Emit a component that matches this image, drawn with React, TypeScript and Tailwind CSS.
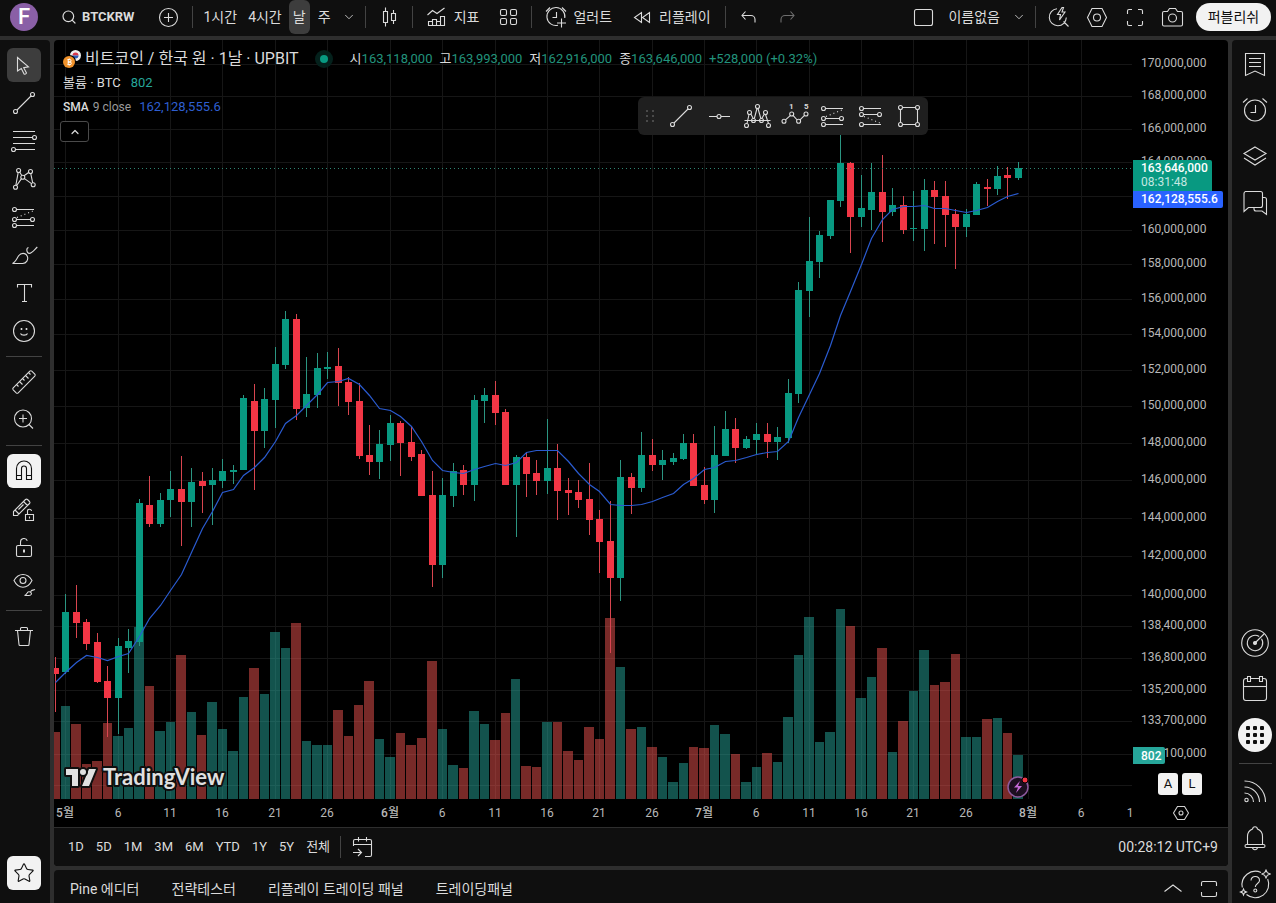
import type { ReactNode } from "react";
import { ChevronDown, ChevronUp, Search, Star } from "lucide-react";

// [up?, high, body top, body bottom, low, volume top]
type Candle = [number, number, number, number, number, number];

const STEP = 10.467;
const FIRST = 65.45;
const xAt = (i: number) => Math.round(FIRST + STEP * i);
const volumeLeft = (i: number) => Math.round(FIRST + STEP * i - 4.5);

// first candle is the last day of April (index -1)
const candles: Candle[] = [
  [0, 657, 668, 674, 712, 732],
  [1, 594, 612, 672, 674, 706],
  [0, 585, 612, 623, 638, 724],
  [0, 619, 622, 644, 650, 764],
  [0, 633, 642, 682, 683, 761],
  [0, 666, 681, 698, 737, 723],
  [1, 638, 646, 698, 734, 736],
  [1, 629, 641, 648, 673, 728],
  [1, 499, 503, 642, 646, 627],
  [0, 476, 505, 524, 527, 686],
  [1, 493, 500, 524, 527, 731],
  [1, 471, 489, 500, 517, 722],
  [0, 456, 489, 502, 546, 655],
  [1, 468, 482, 502, 527, 712],
  [0, 472, 481, 486, 513, 735],
  [1, 468, 480, 485, 525, 702],
  [1, 459, 471, 481, 488, 729],
  [1, 465, 470, 472, 484, 751],
  [1, 395, 398, 470, 470, 697],
  [0, 384, 401, 431, 490, 668],
  [1, 388, 399, 431, 448, 694],
  [1, 347, 364, 400, 428, 632],
  [1, 311, 319, 365, 369, 648],
  [0, 314, 319, 409, 420, 623],
  [1, 357, 394, 408, 417, 741],
  [1, 353, 368, 395, 408, 745],
  [1, 352, 367, 369, 379, 745],
  [0, 348, 366, 383, 406, 710],
  [0, 377, 382, 402, 415, 736],
  [0, 383, 401, 456, 459, 705],
  [0, 425, 455, 462, 475, 681],
  [1, 430, 444, 462, 479, 739],
  [1, 415, 423, 445, 461, 757],
  [0, 421, 423, 443, 476, 733],
  [0, 426, 442, 457, 461, 745],
  [0, 450, 454, 496, 496, 738],
  [0, 471, 495, 565, 587, 661],
  [1, 478, 495, 565, 578, 729],
  [1, 463, 471, 496, 507, 765],
  [0, 465, 470, 485, 495, 768],
  [1, 395, 400, 485, 501, 711],
  [1, 388, 395, 401, 423, 724],
  [0, 381, 395, 413, 425, 740],
  [0, 409, 412, 485, 485, 713],
  [1, 455, 457, 485, 537, 679],
  [0, 452, 457, 474, 497, 766],
  [0, 460, 473, 481, 495, 767],
  [1, 419, 468, 481, 494, 722],
  [0, 444, 468, 491, 520, 722],
  [0, 478, 490, 493, 515, 751],
  [0, 480, 492, 500, 508, 760],
  [0, 463, 499, 520, 535, 727],
  [0, 510, 519, 542, 573, 739],
  [0, 501, 541, 578, 653, 618],
  [1, 460, 477, 578, 601, 667],
  [0, 473, 477, 488, 514, 729],
  [1, 432, 455, 488, 492, 727],
  [0, 439, 455, 465, 471, 747],
  [1, 450, 460, 465, 480, 757],
  [1, 453, 458, 462, 465, 782],
  [1, 434, 443, 459, 460, 763],
  [0, 434, 443, 486, 486, 747],
  [0, 467, 485, 500, 504, 748],
  [1, 426, 455, 500, 513, 725],
  [1, 411, 429, 456, 456, 734],
  [0, 418, 429, 448, 463, 754],
  [1, 436, 439, 448, 449, 782],
  [1, 423, 434, 440, 454, 767],
  [0, 423, 434, 442, 458, 753],
  [1, 427, 437, 442, 460, 762],
  [1, 379, 393, 438, 443, 717],
  [1, 282, 290, 394, 403, 655],
  [1, 217, 261, 291, 317, 617],
  [1, 231, 235, 262, 278, 742],
  [1, 200, 200, 236, 239, 732],
  [1, 130, 163, 201, 207, 609],
  [0, 162, 163, 217, 253, 626],
  [1, 175, 208, 217, 227, 698],
  [1, 163, 192, 210, 230, 677],
  [0, 155, 192, 212, 242, 648],
  [1, 188, 205, 212, 216, 752],
  [0, 196, 205, 230, 234, 721],
  [1, 191, 228, 229, 241, 691],
  [1, 179, 190, 229, 251, 650],
  [0, 181, 190, 197, 244, 685],
  [0, 181, 196, 215, 247, 682],
  [0, 209, 214, 227, 269, 654],
  [1, 209, 214, 227, 237, 737],
  [1, 182, 184, 215, 215, 737],
  [0, 179, 187, 189, 206, 719],
  [1, 166, 176, 189, 195, 718],
  [0, 167, 175, 178, 199, 733],
  [1, 162, 168, 178, 180, 755],
];

const sma = [
  682, 672, 662, 655, 657, 660, 656, 653, 636, 618, 605, 590, 574, 552, 528,
  511, 492, 489, 475, 467, 457, 441, 423, 415, 405, 394, 382, 381, 378, 384,
  395, 408, 410, 416, 426, 441, 460, 470, 472, 473, 469, 466, 463, 465, 462,
  452, 450, 450, 450, 461, 473, 484, 491, 504, 505, 505, 504, 501, 497, 493,
  484, 478, 469, 467, 461, 460, 457, 454, 452, 451, 441, 417, 394, 373, 345,
  315, 291, 264, 238, 219, 209, 206, 206, 205, 208, 208, 210, 212, 210, 207,
  201, 196, 193,
];

// the 162M line has no label: the price tags cover it
const prices: [string, number][] = [
  ["170,000,000", 64],
  ["168,000,000", 96],
  ["166,000,000", 129],
  ["164,000,000", 162],
  ["", 196],
  ["160,000,000", 230],
  ["158,000,000", 264],
  ["156,000,000", 299],
  ["154,000,000", 334],
  ["152,000,000", 370],
  ["150,000,000", 406],
  ["148,000,000", 443],
  ["146,000,000", 480],
  ["144,000,000", 518],
  ["142,000,000", 556],
  ["140,000,000", 595],
  ["138,400,000", 626],
  ["136,800,000", 658],
  ["135,200,000", 690],
  ["133,700,000", 721],
  ["132,100,000", 754],
];

const dates: [string, number][] = [
  ["5월", 0],
  ["6", 5],
  ["11", 10],
  ["16", 15],
  ["21", 20],
  ["26", 25],
  ["6월", 31],
  ["6", 36],
  ["11", 41],
  ["16", 46],
  ["21", 51],
  ["26", 56],
  ["7월", 61],
  ["6", 66],
  ["11", 71],
  ["16", 76],
  ["21", 81],
  ["26", 86],
  ["8월", 92],
  ["6", 97],
];

function Icon({
  size = 28,
  children,
}: {
  size?: number;
  children: ReactNode;
}) {
  return (
    <svg
      width={size}
      height={size}
      viewBox={`0 0 ${size} ${size}`}
      fill="none"
      stroke="currentColor"
      strokeWidth="1.1"
      className="shrink-0"
      aria-hidden="true"
    >
      {children}
    </svg>
  );
}

const TrendLineIcon = () => (
  <Icon>
    <path d="M7 21L21 7" />
    <circle cx="5.5" cy="22.5" r="2" />
    <circle cx="22.5" cy="5.5" r="2" />
  </Icon>
);

const ProjectionIcon = () => (
  <Icon>
    <path d="M6.5 6.5H24M6.5 16.5H20.5M6.5 22.5H24" />
    <path d="M7 14.5L23 8" strokeDasharray="1 3" />
    <circle cx="4.5" cy="6.5" r="2" />
    <circle cx="4.5" cy="16.5" r="2" />
    <circle cx="4.5" cy="22.5" r="2" />
    <circle cx="22.5" cy="16.5" r="2" />
  </Icon>
);

const drawingTools: { label: string; icon: ReactNode }[][] = [
  [
    {
      label: "커서",
      icon: (
        <Icon>
          <path d="M7.5 6.5V20l3.8-2.5 2.8 5.6c.8.3 2-.2 2.4-1l-2.8-5.4 4.8-.9z" />
        </Icon>
      ),
    },
    { label: "추세줄", icon: <TrendLineIcon /> },
    {
      label: "피보나치 되돌림",
      icon: (
        <Icon>
          <path d="M3 4.5h22M3 10.5h19.5M3 16.5h22M5.5 22.5H25" />
          <circle cx="24.5" cy="10.5" r="2" />
          <circle cx="3.5" cy="22.5" r="2" />
        </Icon>
      ),
    },
    {
      label: "패턴",
      icon: (
        <Icon>
          <path d="M5.8 20.5L8.2 7.3M9.6 7l2.2 3.5M14 10.7l5-3.4M20.7 8.3l2 9.5M21.5 18.6l-7.3-5.2M11.5 13.6l-5 7.2" />
          <circle cx="5.5" cy="22.3" r="2" />
          <circle cx="8.6" cy="5.5" r="2" />
          <circle cx="12.8" cy="12.2" r="2" />
          <circle cx="20.5" cy="6.5" r="2" />
          <circle cx="23.2" cy="19.7" r="2" />
        </Icon>
      ),
    },
    { label: "예측", icon: <ProjectionIcon /> },
    {
      label: "브러쉬",
      icon: (
        <Icon>
          <path d="M2.5 22.5h10.2a5.2 5.2 0 0 0 4.6-7.2c-1.8-4-6.5-3.8-8.8-.3-1.6 2.4-3 6.3-6 7.5z" />
          <path d="M18.5 6.5c-2.6.6-2 5.6.8 5.9 2.6.2 4.6-3 8-6.4" />
        </Icon>
      ),
    },
    {
      label: "텍스트",
      icon: (
        <Icon>
          <path d="M7.5 8.5v-3h14v3M14.5 5.5v17M12 22.5h5" />
        </Icon>
      ),
    },
    {
      label: "아이콘",
      icon: (
        <Icon>
          <circle cx="14" cy="14" r="10.5" />
          <path d="M10.5 16.5c.8 2.2 6.2 2.2 7 0" />
          <path d="M11.5 11v2M16.5 11v2" strokeWidth="1.6" />
        </Icon>
      ),
    },
  ],
  [
    {
      label: "측정",
      icon: (
        <Icon>
          <path d="M3.2 19.8L19.8 3.2a1.5 1.5 0 0 1 2 0l3 3a1.5 1.5 0 0 1 0 2L8.2 24.8a1.5 1.5 0 0 1-2 0l-3-3a1.5 1.5 0 0 1 0-2z" />
          <path d="M6.5 16.5l2 2M9.5 13.5l3 3M12.5 10.5l2 2M15.5 7.5l3 3M18.5 4.5l2 2" />
        </Icon>
      ),
    },
    {
      label: "확대",
      icon: (
        <Icon>
          <circle cx="13" cy="12.5" r="8.5" />
          <path d="M19 18.5l4 4M9 12.5h8M13 8.5v8" />
        </Icon>
      ),
    },
  ],
  [
    {
      label: "자석 모드",
      icon: (
        <Icon>
          <path d="M6.5 22.5v-11a7.5 7.5 0 0 1 15 0v11h-5v-11a2.5 2.5 0 0 0-5 0v11zM6.5 18.5h5M16.5 18.5h5" />
        </Icon>
      ),
    },
    {
      label: "드로잉 모드 유지",
      icon: (
        <Icon>
          <path d="M3.5 20.5v-4L15.5 4.5a1.5 1.5 0 0 1 2 0l2 2a1.5 1.5 0 0 1 0 2L7.5 20.5zM13.5 6.5l4 4M5 15l4 4M8.5 14.5l5-5" />
          <path d="M15.5 19.5h8v6h-8zM17.5 19.5v-3a2 2 0 0 1 4-.5M19.5 21.5v2" />
        </Icon>
      ),
    },
    {
      label: "모든 드로잉 잠금",
      icon: (
        <Icon>
          <rect x="6.5" y="12.5" width="15" height="11" rx="1.5" />
          <path d="M10.5 12.5V9a3.5 3.5 0 0 1 6.8-1.2" />
          <path d="M14 16.5v3" strokeWidth="2" />
        </Icon>
      ),
    },
    {
      label: "모든 드로잉 숨기기",
      icon: (
        <Icon>
          <path d="M4 9.5C8.5 1.5 17.5 1.5 22 9.5 17.5 18.5 8.5 18.5 4 9.5z" />
          <circle cx="13" cy="9.5" r="3" />
          <path d="M14.5 24.5h4.5c2.5 0 3-2 1.8-3.2-1.2-1-3-.5-3.6.8-.6 1.2-1.5 2.2-2.7 2.4zM21 21c-.5-2 2-1.5 4-2.5" />
        </Icon>
      ),
    },
  ],
  [
    {
      label: "지우기",
      icon: (
        <Icon>
          <path d="M5 8.5h18M10.5 8.5v-2a1 1 0 0 1 1-1h5a1 1 0 0 1 1 1v2M7.5 8.5l1.5 14a1 1 0 0 0 1 1h8a1 1 0 0 0 1-1l1.5-14" />
        </Icon>
      ),
    },
  ],
];

const favorites: { label: string; icon: ReactNode }[] = [
  { label: "추세줄", icon: <TrendLineIcon /> },
  {
    label: "가로줄",
    icon: (
      <Icon>
        <path d="M4 14.5h8M16 14.5h9" />
        <circle cx="14" cy="14.5" r="2" />
      </Icon>
    ),
  },
  {
    label: "헤드앤숄더",
    icon: (
      <Icon>
        <path d="M1.5 18.5h26M4 21.5L6 12.5M8 12.3l2.3 4.5M11.3 16.5L14 6.5M15 6.5l2.8 10M18.8 16.5l2.3-4M22.5 12.5l3 9" />
        <circle cx="3.5" cy="23.5" r="2" />
        <circle cx="6.5" cy="10.5" r="2" />
        <circle cx="10.5" cy="18.5" r="2" />
        <circle cx="14.5" cy="4.5" r="2" />
        <circle cx="18.5" cy="18.5" r="2" />
        <circle cx="22.5" cy="10.5" r="2" />
        <circle cx="25.5" cy="23.5" r="2" />
      </Icon>
    ),
  },
  {
    label: "엘리엇 임펄스 파동",
    icon: (
      <Icon>
        <path d="M4.5 17.8l5-4.5M12 13.3l4.2 4.7M19 17.8l4.7-4.6" />
        <circle cx="3" cy="19.3" r="2" />
        <circle cx="10.7" cy="12" r="2" />
        <circle cx="17.6" cy="19.3" r="2" />
        <circle cx="25" cy="12" r="2" />
        <text x="8" y="7" fontSize="8" fill="currentColor" stroke="none" className="font-bold">
          1
        </text>
        <text x="23" y="7" fontSize="8" fill="currentColor" stroke="none" className="font-bold">
          5
        </text>
      </Icon>
    ),
  },
  { label: "롱 포지션", icon: <ProjectionIcon /> },
  {
    label: "숏 포지션",
    icon: (
      <Icon>
        <path d="M6.5 6.5H24M6.5 12.5H20.5M6.5 22.5H24" />
        <path d="M7 14.5L23 21" strokeDasharray="1 3" />
        <circle cx="4.5" cy="6.5" r="2" />
        <circle cx="4.5" cy="12.5" r="2" />
        <circle cx="4.5" cy="22.5" r="2" />
        <circle cx="22.5" cy="12.5" r="2" />
      </Icon>
    ),
  },
  {
    label: "네모",
    icon: (
      <Icon>
        <path d="M7.5 5.5h13M7.5 22.5h13M5.5 7.5v13M22.5 7.5v13" />
        <circle cx="5.5" cy="5.5" r="2" />
        <circle cx="22.5" cy="5.5" r="2" />
        <circle cx="5.5" cy="22.5" r="2" />
        <circle cx="22.5" cy="22.5" r="2" />
      </Icon>
    ),
  },
];

const widgetsTop: { label: string; icon: ReactNode }[] = [
  {
    label: "왓치리스트",
    icon: (
      <Icon>
        <path d="M4.5 2.5h19v22l-9.5-4.5-9.5 4.5zM8 7.5h12M8 11.5h12M8 15.5h12" />
      </Icon>
    ),
  },
  {
    label: "얼러트",
    icon: (
      <Icon>
        <circle cx="14" cy="13.5" r="10.5" />
        <path d="M14.5 8v7.5H9.5M2 5.5l4.5-4M26 5.5l-4.5-4" />
      </Icon>
    ),
  },
  {
    label: "오브젝트 트리",
    icon: (
      <Icon>
        <path d="M14 4L25 10.5 14 17 3 10.5zM3 15L14 22 25 15" />
      </Icon>
    ),
  },
  {
    label: "채팅",
    icon: (
      <Icon>
        <path d="M4.5 2.5h15a2 2 0 0 1 2 2v12a2 2 0 0 1-2 2H7.5l-4.500 4v-18a2 2 0 0 1 1.500-2z" />
        <path d="M21.5 8.5h2a2 2 0 0 1 2 2v15l-4.500-3.500h-6a2 2 0 0 1-2-2v-1.500" />
      </Icon>
    ),
  },
];

const widgetsBottom: { label: string; icon: ReactNode }[] = [
  {
    label: "종목 스크리너",
    icon: (
      <Icon>
        <circle cx="14" cy="14" r="13.3" />
        <path d="M20.5 9.8a7.7 7.7 0 1 1-2.300-2.300M14 14l9-9" />
        <circle cx="14" cy="14" r="1.5" fill="currentColor" />
      </Icon>
    ),
  },
  {
    label: "캘린더",
    icon: (
      <Icon>
        <rect x="2.5" y="3.5" width="23" height="22" rx="2.5" />
        <path d="M2.5 11.5h23" />
        <path d="M6.5 1.5h3v5h-3zM18.5 1.5h3v5h-3z" fill="#0f0f0f" />
      </Icon>
    ),
  },
];

const widgetsFooter: { label: string; icon: ReactNode }[] = [
  {
    label: "스트림",
    icon: (
      <Icon>
        <path d="M3.5 3A21 21 0 0 1 24.5 24M3.5 9A15 15 0 0 1 18.5 24M3.5 15A9 9 0 0 1 12.5 24" />
        <circle cx="5.5" cy="22" r="1.7" />
      </Icon>
    ),
  },
  {
    label: "알림",
    icon: (
      <Icon>
        <path d="M6.5 20.5v-8a8 8 0 0 1 5-7.400c.3-3.200 4.700-3.200 5 0a8 8 0 0 1 5 7.400v8" />
        <rect x="4" y="20.5" width="20" height="3" rx="1.5" />
        <path d="M11.5 23.5c.5 3 4.500 3 5 0" />
      </Icon>
    ),
  },
  {
    label: "도움말",
    icon: (
      <Icon size={32}>
        <path d="M22 4.400A13.500 13.500 0 0 0 3.300 19.500M7.500 26.500A13.500 13.500 0 0 0 28.700 11" />
        <path d="M12 12.500c0-5.500 8.500-5 8.500 0 0 3-4.200 3-4.200 6.500" />
        <circle cx="16.3" cy="22.5" r="1.5" />
        <path d="M27 2l1.300 2.700L31 6l-2.700 1.300L27 10l-1.300-2.700L23 6l2.700-1.300zM4.500 21l.9 2.100 2.100.9-2.100.9-.9 2.100-.9-2.100-2.100-.9 2.100-.9z" />
      </Icon>
    ),
  },
];

const ohlc = [
  ["시", "163,118,000"],
  ["고", "163,993,000"],
  ["저", "162,916,000"],
  ["종", "163,646,000"],
];

const ranges = ["1D", "5D", "1M", "3M", "6M", "YTD", "1Y", "5Y", "전체"];
const tabs = ["Pine 에디터", "전략테스터", "리플레이 트레이딩 패널", "트레이딩패널"];

function Divider() {
  return <div className="h-[22px] w-px shrink-0 bg-[#434343]" />;
}

function Header() {
  return (
    <header className="flex h-9 shrink-0 items-center justify-between bg-[#0f0f0f] pb-[2px] text-sm text-[#dbdbdb]">
      <div className="flex items-center">
        <button className="ml-[10px] size-7 rounded-full bg-[#8a5fa6] text-[22px] leading-7 font-medium text-white">
          F
        </button>
        <button className="ml-[23px] flex items-center gap-[5px] text-[13px] font-bold">
          <Search size={16} strokeWidth={1.8} />
          BTCKRW
        </button>
        <button className="ml-5" aria-label="심볼 비교">
          <Icon>
            <circle cx="14.5" cy="14.5" r="9" />
            <path d="M14.5 10v9M10 14.5h9" />
          </Icon>
        </button>
        <div className="ml-[10px]">
          <Divider />
        </div>
        <button className="ml-[10px]">1시간</button>
        <button className="ml-[11px]">4시간</button>
        <button className="ml-[7px] h-[34px] w-[21px] rounded-[6px] bg-[#3d3d3d]">날</button>
        <button className="ml-2">주</button>
        <button className="mr-[9px] ml-[11px]" aria-label="차트 인터벌">
          <ChevronDown size={14} strokeWidth={1.4} />
        </button>
        <Divider />
        <button className="mx-[9px]" aria-label="캔들">
          <Icon>
            <path d="M8.5 8.5h4v11h-4zM10.5 4.5v4M10.5 19.5v4M16.5 10.5h4v7h-4zM18.5 7v3.5M18.5 17.5V21" />
          </Icon>
        </button>
        <Divider />
        <button className="ml-[10px] flex items-center gap-[3px]">
          <Icon>
            <path d="M5.5 22.5v-4h4v4zM9.5 22.5v-6h4v6zM13.5 22.5v-4h4v4zM17.5 22.5v-9h4v9zM4.5 12l5-4.500 4.500 3L21.500 5" />
          </Icon>
          지표
        </button>
        <button className="ml-[15px]" aria-label="레이아웃 템플릿">
          <Icon>
            <rect x="6.5" y="6.5" width="6" height="6" rx="1.5" />
            <rect x="16.5" y="6.5" width="6" height="6" rx="1.5" />
            <rect x="6.5" y="15.5" width="6" height="6" rx="1.5" />
            <rect x="16.5" y="15.5" width="6" height="6" rx="1.5" />
          </Icon>
        </button>
        <div className="ml-[9px]">
          <Divider />
        </div>
        <button className="ml-[10px] flex items-center gap-[3px]">
          <Icon>
            <path d="M16 22.300A9 9 0 1 1 22.800 15M14.500 9v5.500h-4M4 8.500L8 4.500M24 8.500l-4-4M19.500 15.500v9M15 20h9" />
          </Icon>
          얼러트
        </button>
        <button className="ml-4 flex items-center gap-[3px]">
          <Icon>
            <path d="M13.5 9.500v10l-7-5zM21.500 9.500v10l-7-5z" />
          </Icon>
          리플레이
        </button>
        <div className="ml-[14px]">
          <Divider />
        </div>
        <button className="ml-[9px]" aria-label="되돌리기">
          <Icon>
            <path d="M10.5 8.500l-3.500 4 3.500 4M7 12.500h9a4 4 0 0 1 4 4v3" />
          </Icon>
        </button>
        <button className="ml-[10px] text-[#6e6e6e]" aria-label="다시하기">
          <Icon>
            <path d="M17.5 8.500l3.500 4-3.500 4M21 12.500h-9a4 4 0 0 0-4 4v3" />
          </Icon>
        </button>
      </div>

      <div className="flex items-center">
        <button aria-label="레이아웃 셋업">
          <Icon>
            <rect x="4.5" y="6.5" width="18" height="16" rx="2" />
          </Icon>
        </button>
        <button className="ml-[10px] flex items-center gap-3">
          이름없음
          <ChevronDown size={14} strokeWidth={1.4} />
        </button>
        <div className="mr-[9px] ml-[9px]">
          <Divider />
        </div>
        <button aria-label="퀵서치">
          <Icon>
            <path d="M12 5.800a8.500 8.500 0 1 0 9.300 8.700M18.500 18.500l5 5M17 4.500l-4.500 7h3l-1 5.500 5.500-8h-3l1.500-4.500z" />
          </Icon>
        </button>
        <button className="ml-[10px]" aria-label="세팅">
          <Icon>
            <path d="M9 5.500h10l4.500 9-4.500 9H9l-4.500-9z" />
            <circle cx="14" cy="14.5" r="3.5" />
          </Icon>
        </button>
        <button className="ml-[10px]" aria-label="풀스크린 모드">
          <Icon>
            <path d="M6.5 11V8a1.500 1.500 0 0 1 1.500-1.500h3M17 6.500h3A1.500 1.500 0 0 1 21.500 8v3M21.500 18v3a1.500 1.500 0 0 1-1.500 1.500h-3M11 22.500H8A1.500 1.500 0 0 1 6.500 21v-3" />
          </Icon>
        </button>
        <button className="ml-[9px]" aria-label="스냅샷">
          <Icon>
            <path d="M6 8.500h3.500l2-3h6l2 3H23a1.500 1.500 0 0 1 1.500 1.500v11.500A1.500 1.500 0 0 1 23 23H6a1.500 1.500 0 0 1-1.500-1.500V10A1.500 1.500 0 0 1 6 8.500z" />
            <circle cx="14.5" cy="15" r="4" />
          </Icon>
        </button>
        <button className="mr-[5px] ml-[10px] h-7 w-[75px] rounded-full bg-[#f2f2f2] text-[#0f0f0f]">
          퍼블리쉬
        </button>
      </div>
    </header>
  );
}

function LeftToolbar() {
  return (
    <nav className="flex w-[50px] shrink-0 flex-col items-center rounded-tr bg-[#0f0f0f] pt-2 pr-[2px] pb-[13px] text-[#dbdbdb]">
      {drawingTools.map((group, g) => (
        <div key={g} className="flex flex-col items-center">
          {g > 0 && <div className="my-2 h-px w-9 bg-[#434343]" />}
          <div className="flex flex-col gap-1">
            {group.map((tool) => (
              <button
                key={tool.label}
                aria-label={tool.label}
                className={
                  tool.label === "커서"
                    ? "flex size-[34px] items-center justify-center rounded-[6px] bg-[#3d3d3d]"
                    : tool.label === "자석 모드"
                      ? "flex size-[34px] items-center justify-center rounded-[6px] bg-[#f2f2f2] text-[#0f0f0f]"
                      : "flex size-[34px] items-center justify-center"
                }
              >
                {tool.icon}
              </button>
            ))}
          </div>
        </div>
      ))}
      <button
        aria-label="즐겨찾기 툴바"
        className="mt-auto flex size-[34px] items-center justify-center rounded-[6px] bg-[#f2f2f2] text-[#0f0f0f]"
      >
        <Star size={22} strokeWidth={1.2} />
      </button>
    </nav>
  );
}

function RightToolbar() {
  const item = "flex h-9 w-[42px] items-center justify-center";
  return (
    <nav className="flex w-11 shrink-0 flex-col items-center justify-between rounded-tl bg-[#0f0f0f] pt-[7px] pb-px pl-[2px] text-[#dbdbdb]">
      <div className="flex flex-col gap-2.5">
        {widgetsTop.map((w) => (
          <button key={w.label} aria-label={w.label} className={item}>
            {w.icon}
          </button>
        ))}
      </div>
      <div className="flex flex-col items-center gap-2.5">
        {widgetsBottom.map((w) => (
          <button key={w.label} aria-label={w.label} className={item}>
            {w.icon}
          </button>
        ))}
        <button aria-label="프로덕트" className={item}>
          <span className="grid size-[34px] grid-cols-[4px_4px_4px] place-content-center gap-[3px] rounded-full bg-[#f2f2f2]">
            {Array.from({ length: 9 }, (_, i) => (
              <span key={i} className="size-1 rounded-[1px] bg-[#0f0f0f]" />
            ))}
          </span>
        </button>
        <div className="h-px w-[33px] bg-[#434343]" />
        {widgetsFooter.map((w) => (
          <button key={w.label} aria-label={w.label} className={item}>
            {w.icon}
          </button>
        ))}
      </div>
    </nav>
  );
}

function PriceChart() {
  return (
    <svg
      viewBox="54 40 1174 787"
      preserveAspectRatio="none"
      className="block h-full w-full"
      role="img"
      aria-label="BTCKRW 일봉 차트"
    >
      <g fill="#161616">
        {prices.map(([, y]) => (
          <rect key={y} x="54" y={y} width="1078" height="1" />
        ))}
        <rect x="54" y="785" width="1078" height="1" />
        {dates.map(([, i]) => (
          <rect key={i} x={xAt(i)} y="40" width="1" height="759" />
        ))}
      </g>

      {candles.map(([up, , , , , top], n) => (
        <rect
          key={n}
          x={volumeLeft(n - 1)}
          y={top}
          width={volumeLeft(n) - volumeLeft(n - 1) - 1}
          height={799 - top}
          fill={up ? "#26a69a" : "#ef5350"}
          fillOpacity="0.5"
        />
      ))}

      {candles.map(([up, high, top, bottom, low], n) => (
        <g key={n}>
          <rect
            x={xAt(n - 1)}
            y={high}
            width="1"
            height={low - high}
            fill={up ? "#2b9581" : "#d8454f"}
          />
          <rect
            x={xAt(n - 1) - 3}
            y={top}
            width="7"
            height={bottom - top}
            fill={up ? "#089981" : "#f23645"}
          />
        </g>
      ))}

      <polyline
        points={sma.map((y, n) => `${xAt(n - 1) + 0.5},${y + 0.5}`).join(" ")}
        fill="none"
        stroke="#2a5bd0"
        strokeWidth="1.2"
      />
      <path d="M54 168.5H1132" stroke="#2f8573" strokeDasharray="1 3" />

      <g fontSize="12" fill="#b8b8b8">
        {prices
          .filter(([label]) => label)
          .map(([label, y]) => (
            <text key={label} x="1141" y={y + 3}>
              {label}
            </text>
          ))}
        {dates.map(([label, i]) => (
          <text
            key={i}
            x={xAt(i)}
            y="817"
            textAnchor="middle"
            className={label.endsWith("월") ? "font-medium" : ""}
          >
            {label}
          </text>
        ))}
        <text x="1130" y="817" textAnchor="middle">
          1
        </text>
      </g>

      <path d="M1133 160h77a2 2 0 0 1 2 2v29h-79z" fill="#089981" />
      <path d="M1133 191h88a2 2 0 0 1 2 2v13a2 2 0 0 1-2 2h-88z" fill="#2962ff" />
      <path d="M1133 747h30a2 2 0 0 1 2 2v13a2 2 0 0 1-2 2h-30z" fill="#26a69a" />
      <g fontSize="12" fill="#fff" className="font-medium">
        <text x="1141" y="172">163,646,000</text>
        <text x="1141" y="203">162,128,555.6</text>
        <text x="1141" y="760">802</text>
      </g>
      <text x="1141" y="186" fontSize="12" fill="#c5e8e1">
        08:31:48
      </text>

      <circle cx="1018" cy="787" r="10" fill="#1c0f20" stroke="#8d5a9e" strokeWidth="1.5" />
      <path d="M1020 781l-6 6.5h4l-2 5.5 6-7h-4z" fill="#c66bd8" />
      <circle cx="1025" cy="780" r="3" fill="#f23645" stroke="#000" />

      <g fill="#e0e0e0" stroke="#0f0f0f" strokeWidth="4" strokeLinejoin="round" paintOrder="stroke">
        <path d="M66 769h12v17h-6v-11h-6zM89 769h7l-7 17h-7z" />
        <circle cx="83" cy="772" r="3" />
        <text x="103" y="785" fontSize="22" className="font-[Lato] font-bold">
          TradingView
        </text>
      </g>
    </svg>
  );
}

function Legend() {
  return (
    <div className="absolute top-[9px] left-[9px] text-[13px] text-[#dbdbdb]">
      <div className="flex h-5 items-center">
        <svg width="18" height="18" viewBox="0 0 18 18" aria-hidden="true">
          <circle cx="12.5" cy="5.5" r="5.5" fill="#eee" />
          <path d="M9.5 5.5a3 3 0 0 1 6 0z" fill="#d8384a" />
          <path d="M9.5 5.5a3 3 0 0 0 6 0z" fill="#2b5cb8" />
          <circle cx="6.5" cy="11.5" r="6.5" fill="#000" />
          <circle cx="6" cy="12" r="6" fill="#f0922b" />
          <path
            d="M4.5 9.5h2.300a1.200 1.200 0 0 1 0 2.500H5h2a1.300 1.300 0 0 1 0 2.600H4.500M5.200 9.500v5M6.300 8.500v1M6.300 14.500v1"
            fill="none"
            stroke="#fff"
          />
        </svg>
        <h1 className="ml-1 text-base whitespace-nowrap">
          비트코인 / 한국 원 · 1날 · UPBIT
        </h1>
        <span className="ml-4 flex size-[18px] items-center justify-center rounded-full bg-[#04211c]">
          <span className="size-2 rounded-full bg-[#089981]" />
        </span>
        <div className="ml-[17px] flex gap-[7px] whitespace-nowrap">
          {ohlc.map(([label, value]) => (
            <span key={label}>
              {label}
              <span className="text-[#22937c]">{value}</span>
            </span>
          ))}
          <span className="text-[#22937c]">+528,000 (+0.32%)</span>
        </div>
      </div>
      <div className="mt-1 flex h-5 items-center gap-[10px]">
        <span>볼륨 · BTC</span>
        <span className="text-[#26a69a]">802</span>
      </div>
      <div className="mt-1 flex h-5 items-center">
        <span className="text-xs font-medium">SMA</span>
        <span className="ml-1 text-xs text-[#9a9a9a]">9 close</span>
        <span className="ml-2 text-[#2f5fd0]">162,128,555.6</span>
      </div>
      <button
        aria-label="인디케이터 레전드 숨기기"
        className="mt-1 -ml-[3px] flex h-[21px] w-[29px] items-center justify-center rounded-[3px] border border-[#4a4a4a] bg-black"
      >
        <ChevronUp size={12} strokeWidth={2.4} />
      </button>
    </div>
  );
}

function FavoritesBar() {
  return (
    <div className="absolute top-[57px] left-[584px] flex h-[38px] items-center rounded-[6px] bg-[#1f1f1f] pr-[5px] pl-2 text-[#dbdbdb]">
      <div className="mr-[13px] grid grid-cols-2 gap-x-1 gap-y-[3px]">
        {Array.from({ length: 6 }, (_, i) => (
          <span key={i} className="size-[2px] bg-[#4a4a4a]" />
        ))}
      </div>
      <div className="flex gap-[10px]">
        {favorites.map((tool) => (
          <button key={tool.label} aria-label={tool.label}>
            {tool.icon}
          </button>
        ))}
      </div>
    </div>
  );
}

function ChartPanel() {
  return (
    <section className="flex min-h-0 flex-1 flex-col overflow-hidden rounded bg-black">
      <div className="relative min-h-0 flex-1">
        <PriceChart />
        <Legend />
        <FavoritesBar />
        <div className="absolute right-[26px] bottom-[32px] flex gap-1">
          <button className="h-[22px] w-5 rounded-[3px] bg-[#f2f2f2] text-[13px] text-[#0f0f0f]">
            A
          </button>
          <button className="h-[22px] w-5 rounded-[3px] bg-[#f2f2f2] text-[13px] text-[#0f0f0f]">
            L
          </button>
        </div>
        <button
          aria-label="액시스 세팅"
          className="absolute right-[38px] bottom-[5px] text-[#cfcfcf]"
        >
          <Icon size={18}>
            <path d="M5.5 2.500h7l4 6.500-4 6.500h-7L1.500 9z" />
            <circle cx="9" cy="9" r="2" />
          </Icon>
        </button>
      </div>
      <div className="flex h-[39px] shrink-0 items-center justify-between border-t border-[#2e2e2e] bg-[#0f0f0f] pr-[10px] pl-[14px] text-[13px] text-[#dbdbdb]">
        <div className="flex items-center">
          <div className="flex gap-3">
            {ranges.map((r) => (
              <button key={r}>{r}</button>
            ))}
          </div>
          <div className="mr-[10px] ml-[10px]">
            <Divider />
          </div>
          <button aria-label="다음 날짜로 가기">
            <Icon size={24}>
              <path d="M2.5 11V6A1.500 1.500 0 0 1 4 4.500h15A1.500 1.500 0 0 1 20.500 6v14a1.500 1.500 0 0 1-1.500 1.500h-5M2.500 9.500h18M7.500 2v4.500M15.500 2v4.500M2 17.500h8M7 14l3.500 3.500L7 21" />
            </Icon>
          </button>
        </div>
        <button className="text-sm">00:28:12 UTC+9</button>
      </div>
    </section>
  );
}

function BottomTabs() {
  return (
    <footer className="flex h-[33px] shrink-0 items-center justify-between rounded-t bg-[#0f0f0f] pt-1 pr-[5px] pl-4 text-sm text-[#dbdbdb]">
      <div className="flex gap-8">
        {tabs.map((tab) => (
          <button key={tab}>{tab}</button>
        ))}
      </div>
      <div className="flex gap-2">
        <button aria-label="패널 열기">
          <Icon>
            <path d="M5.5 16.500l8.500-6.500 8.500 6.500" />
          </Icon>
        </button>
        <button aria-label="패널 최대화">
          <Icon>
            <path d="M6.5 11V8A1.500 1.500 0 0 1 8 6.500h12A1.500 1.500 0 0 1 21.500 8v3M21.500 17v3a1.500 1.500 0 0 1-1.500 1.500H8A1.500 1.500 0 0 1 6.500 20v-3" />
          </Icon>
        </button>
      </div>
    </footer>
  );
}

export default function App() {
  return (
    <div className="flex h-screen flex-col gap-1 overflow-hidden bg-[#2e2e2e] font-[Roboto,'Noto_Sans_CJK_KR',sans-serif]">
      <Header />
      <div className="flex min-h-0 flex-1 gap-1">
        <LeftToolbar />
        <main className="flex min-w-0 flex-1 flex-col gap-1">
          <ChartPanel />
          <BottomTabs />
        </main>
        <RightToolbar />
      </div>
    </div>
  );
}
